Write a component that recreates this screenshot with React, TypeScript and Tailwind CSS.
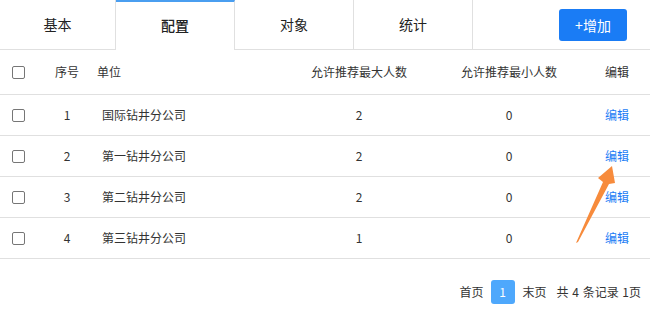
import { useState } from "react";

type Row = { id: number; unit: string; max: number; min: number };

const rows: Row[] = [
  { id: 1, unit: "国际钻井分公司", max: 2, min: 0 },
  { id: 2, unit: "第一钻井分公司", max: 2, min: 0 },
  { id: 3, unit: "第二钻井分公司", max: 2, min: 0 },
  { id: 4, unit: "第三钻井分公司", max: 1, min: 0 },
];

const tabs = [
  { name: "基本", w: "w-[116px]" },
  { name: "配置", w: "w-[119px]" },
  { name: "对象", w: "w-[119px]" },
  { name: "统计", w: "w-[119px]" },
];

function Check() {
  return (
    <input
      type="checkbox"
      className="appearance-none block w-[13px] h-[13px] border border-[#767676] rounded-[2px] bg-white"
    />
  );
}

export default function App() {
  const [active, setActive] = useState(1);

  return (
    <div
      className="relative w-[650px] h-[321px] bg-white text-[#333] overflow-hidden"
      style={{ fontFamily: '"Noto Sans CJK SC", "Noto Sans", sans-serif' }}
    >
      {/* 标签栏 */}
      <div className="flex h-[50px]">
        {tabs.map((t, i) => (
          <div
            key={t.name}
            onClick={() => setActive(i)}
            className={
              i === active
                ? `${t.w} h-[50px] flex items-center justify-center pb-[2px] border-r border-[#e0e0e0] border-t-2 border-t-[#4a9ef0] text-[14px] font-medium text-[#222] cursor-pointer`
                : `${t.w} h-[50px] flex items-center justify-center border-r border-b border-[#e0e0e0] text-[14px] text-[#222] cursor-pointer`
            }
          >
            {t.name}
          </div>
        ))}
        <div className="flex-1 flex items-center justify-end pr-[23px] border-b border-[#e0e0e0]">
          <button className="w-[68px] h-[32px] rounded-[3px] bg-[#1a7cf5] text-white text-[14px] leading-none">
            +增加
          </button>
        </div>
      </div>

      {/* 表格 */}
      <div className="text-[12px]">
        <div className="flex items-center h-[45px] border-b border-[#e0e0e0]">
          <div className="w-[40px] pl-[12px]">
            <Check />
          </div>
          <div className="w-[54px] text-center">序号</div>
          <div className="w-[190px] pl-[3px]">单位</div>
          <div className="w-[150px] text-center">允许推荐最大人数</div>
          <div className="w-[150px] text-center">允许推荐最小人数</div>
          <div className="flex-1 text-center">编辑</div>
        </div>
        {rows.map((r) => (
          <div key={r.id} className="flex items-center h-[41px] border-b border-[#e0e0e0]">
            <div className="w-[40px] pl-[12px]">
              <Check />
            </div>
            <div className="w-[54px] text-center">{r.id}</div>
            <div className="w-[190px] pl-[8px]">{r.unit}</div>
            <div className="w-[150px] text-center">{r.max}</div>
            <div className="w-[150px] text-center">{r.min}</div>
            <div className="flex-1 text-center text-[#1a7cf5] cursor-pointer">编辑</div>
          </div>
        ))}
      </div>

      {/* 分页 */}
      <div className="flex items-center justify-end mt-[21px] pr-[9px] text-[12px]">
        <span>首页</span>
        <span className="ml-[7px] w-[24px] h-[24px] rounded-[3px] bg-[#4ea8fc] text-white flex items-center justify-center">
          1
        </span>
        <span className="ml-[8px]">末页</span>
        <span className="ml-[10px] [word-spacing:1px]">共 4 条记录 1页</span>
      </div>

      {/* 标注箭头 */}
      <svg className="absolute inset-0 pointer-events-none" width="650" height="321" viewBox="0 0 650 321">
        <polygon points="576,243 603,182 598,178 612,166 615,183 609,184 578,242" fill="#f78b3c" />
      </svg>
    </div>
  );
}
